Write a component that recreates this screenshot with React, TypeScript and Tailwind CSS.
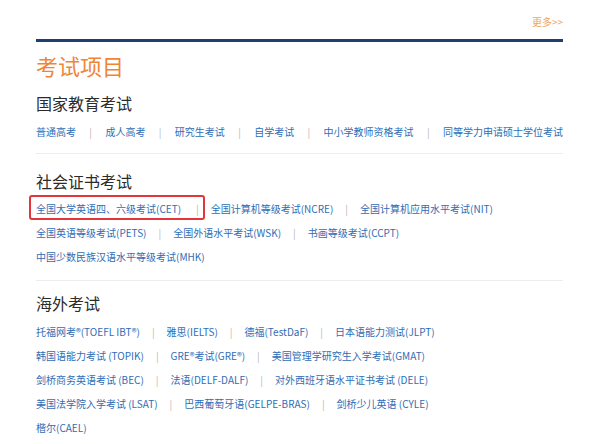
import React from 'react';

type Row = string[];

const Sep: React.FC<{ className?: string }> = ({ className = 'mx-3' }) => (
  <span className={`text-[#b8b8b8] ${className}`}>|</span>
);

const LinkRow: React.FC<{ items: Row; spread?: boolean }> = ({ items, spread }) => {
  if (spread) {
    return (
      <div className="flex justify-between h-6 items-center text-[10px] text-[#2f6db5]">
        {items.map((t, i) => (
          <React.Fragment key={i}>
            {i > 0 && <Sep className="" />}
            <a className="whitespace-nowrap">{t}</a>
          </React.Fragment>
        ))}
      </div>
    );
  }
  return (
    <div className="flex h-6 items-center text-[10px] text-[#2f6db5] whitespace-nowrap">
      {items.map((t, i) => (
        <React.Fragment key={i}>
          {i > 0 && <Sep />}
          <a>{t}</a>
        </React.Fragment>
      ))}
    </div>
  );
};

const national: Row = ['普通高考', '成人高考', '研究生考试', '自学考试', '中小学教师资格考试', '同等学力申请硕士学位考试'];

const social: Row[] = [
  ['全国英语等级考试(PETS)', '全国外语水平考试(WSK)', '书画等级考试(CCPT)'],
  ['中国少数民族汉语水平等级考试(MHK)'],
];

const overseas: Row[] = [
  ['托福网考®(TOEFL IBT®)', '雅思(IELTS)', '德福(TestDaF)', '日本语能力测试(JLPT)'],
  ['韩国语能力考试 (TOPIK)', 'GRE®考试(GRE®)', '美国管理学研究生入学考试(GMAT)'],
  ['剑桥商务英语考试 (BEC)', '法语(DELF-DALF)', '对外西班牙语水平证书考试 (DELE)'],
  ['美国法学院入学考试 (LSAT)', '巴西葡萄牙语(GELPE-BRAS)', '剑桥少儿英语 (CYLE)'],
  ['楷尔(CAEL)'],
];

export default function App() {
  return (
    <div className="w-[600px] h-[444px] bg-white overflow-hidden font-['Noto_Sans_CJK_SC',sans-serif]">
      <div className="ml-[36px] w-[527px]">
        <div className="pt-[15px] h-[39px] flex justify-end">
          <span className="text-[10px] leading-[14px] text-[#f3a25e]">更多&gt;&gt;</span>
        </div>
        <div className="h-[3px] bg-[#1d3f73]" />

        <h1 className="mt-[10px] text-[22px] leading-[26px] text-[#ef8535]">考试项目</h1>

        {/* 国家教育考试 */}
        <h2 className="mt-[13px] text-[16px] leading-6 text-[#2b2b2b]">国家教育考试</h2>
        <div className="mt-[4px]">
          <LinkRow items={national} spread />
        </div>
        <div className="mt-[10px] h-px bg-[#ededed]" />

        {/* 社会证书考试 */}
        <h2 className="mt-[15px] text-[16px] leading-6 text-[#2b2b2b]">社会证书考试</h2>
        <div className="mt-[3px]">
          <div className="flex h-6 items-stretch text-[10px] text-[#2f6db5] whitespace-nowrap">
            <span className="relative flex items-center">
              <span className="absolute -left-[7px] -right-[6px] -top-[1px] bottom-0 border-2 border-[#e2363a] rounded-[3px]" />
              <a>全国大学英语四、六级考试(CET)</a>
              <span className="text-[#b8b8b8] ml-[15px]">|</span>
            </span>
            <span className="ml-3" />
            <span className="flex items-center">
              <a>全国计算机等级考试(NCRE)</a>
              <Sep />
              <a>全国计算机应用水平考试(NIT)</a>
            </span>
          </div>
          {social.map((r, i) => (
            <LinkRow key={i} items={r} />
          ))}
        </div>
        <div className="mt-[12px] h-px bg-[#ededed]" />

        {/* 海外考试 */}
        <h2 className="mt-[10px] text-[16px] leading-6 text-[#2b2b2b]">海外考试</h2>
        <div className="mt-[4px]">
          {overseas.map((r, i) => (
            <LinkRow key={i} items={r} />
          ))}
        </div>
      </div>
    </div>
  );
}
